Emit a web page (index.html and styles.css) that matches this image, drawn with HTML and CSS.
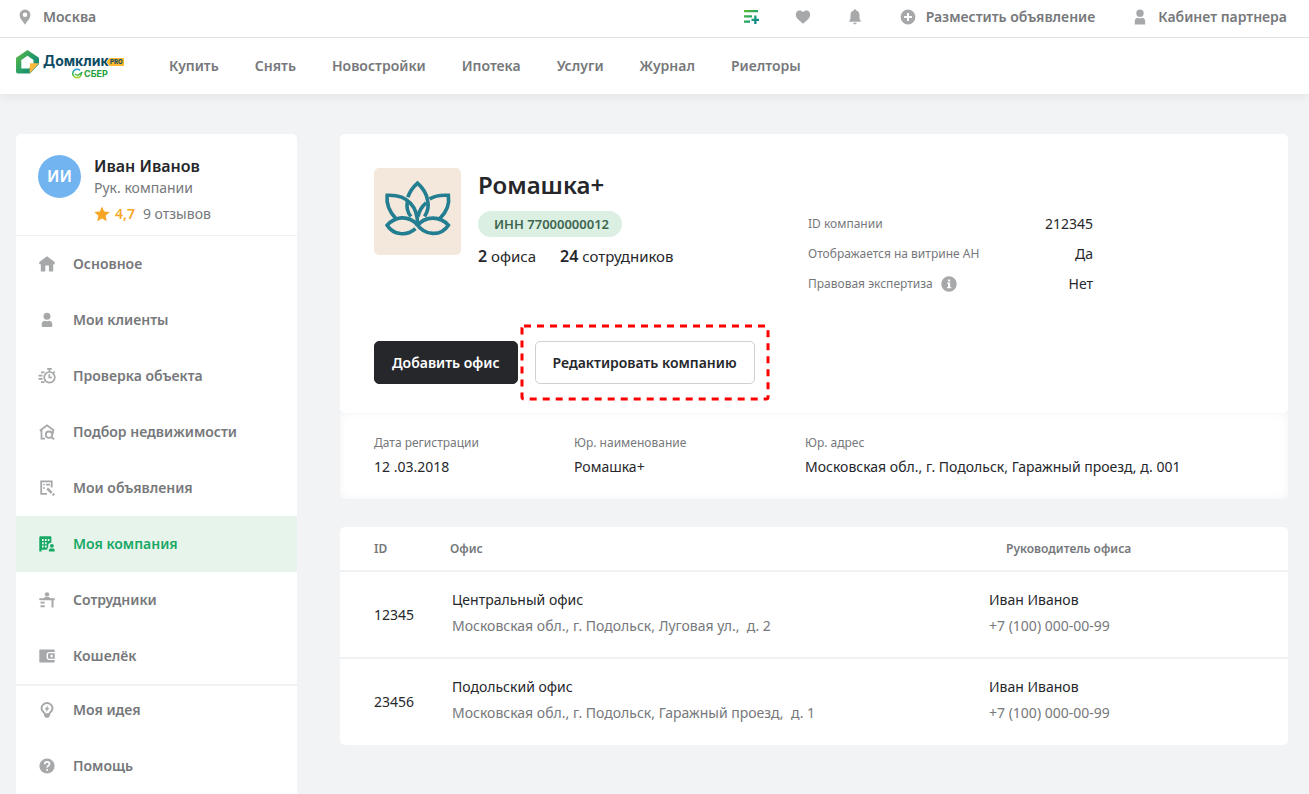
FILE: index.html
```html
<!DOCTYPE html>
<html lang="ru">
<head>
<meta charset="utf-8">
<meta name="viewport" content="width=device-width, initial-scale=1">
<title>Моя компания — Домклик PRO</title>
<link rel="stylesheet" href="styles.css">
</head>
<body>
<header class="site-header">
  <div class="topbar">
    <button class="top-link city" type="button">
      <svg class="icon" viewBox="0 0 16 16"><path fill-rule="evenodd" d="M8 0.5a5.4 5.4 0 0 0-5.4 5.4C2.600 9.700 6 12 8 15.700 10 12 13.400 9.700 13.400 5.900A5.400 5.400 0 0 0 8 .5zm0 2.900a2.300 2.300 0 1 1 0 4.600 2.300 2.300 0 0 1 0-4.600z"/></svg>
      <span>Москва</span>
    </button>
    <div class="top-icons">
      <button class="icon-button" type="button" aria-label="Сравнение">
        <svg class="icon-wide" viewBox="0 0 18 18">
          <defs><linearGradient id="compare" x1="0" y1="0" x2="1" y2="1"><stop offset="0" stop-color="#62bb2b"/><stop offset=".55" stop-color="#1fa36b"/><stop offset="1" stop-color="#087ea8"/></linearGradient></defs>
          <path fill="url(#compare)" d="M2 2h14v2.200H2zM2 7.200h8v2.200H2zM2 12.600h6v2.200H2zM12.200 7.600h2.300v3.100H17v2.300h-2.500V16h-2.300v-3H9.500v-2.300h2.700z"/>
        </svg>
      </button>
      <button class="icon-button" type="button" aria-label="Избранное">
        <svg class="icon" viewBox="0 0 16 16"><path d="M8 14.700 2.700 9.900C.5 7.800.2 4.600 1.700 2.900 3.300 1 6.400 1.100 8 3.300c1.600-2.200 4.700-2.300 6.300-.4 1.500 1.700 1.200 4.900-1 7z"/></svg>
      </button>
      <button class="icon-button" type="button" aria-label="Уведомления">
        <svg class="icon" viewBox="0 0 16 16"><path d="M8 .3c.7 0 1.100.5 1.100 1.200C11.400 2 12.500 3.800 12.500 6v3.500c0 1 1.300 1.600 1.300 3.200H2.200c0-1.600 1.300-2.200 1.300-3.200V6c0-2.200 1.100-4 3.400-4.500C6.900.8 7.300.3 8 .3zM6.300 13.700h3.400C9.500 15.800 6.500 15.800 6.300 13.700z"/></svg>
      </button>
    </div>
    <a class="top-link" href="#">
      <svg class="icon" viewBox="0 0 16 16"><path fill-rule="evenodd" d="M8 .6a7.400 7.400 0 1 0 0 14.800A7.400 7.400 0 0 0 8 .6zM7 4h2v3h3v2H9v3H7V9H4V7h3z"/></svg>
      <span>Разместить объявление</span>
    </a>
    <a class="top-link cabinet" href="#">
      <svg class="icon" viewBox="0 0 16 16"><circle cx="8" cy="4.300" r="3.700"/><path d="M2.800 15.400V12c0-2 1.600-3.300 3-3.300 1.400.7 3 .7 4.400 0 1.400 0 3 1.300 3 3.300v3.400z"/></svg>
      <span>Кабинет партнера</span>
    </a>
  </div>
  <div class="navbar">
    <a class="logo" href="#" aria-label="Домклик PRO">
      <svg viewBox="0 0 110 34">
        <defs>
          <linearGradient id="house" x1="0" y1=".2" x2="1" y2=".9"><stop offset="0" stop-color="#5bb947"/><stop offset=".5" stop-color="#239b68"/><stop offset="1" stop-color="#12807a"/></linearGradient>
          <linearGradient id="check" x1="0" y1="0" x2="0" y2="1"><stop offset="0" stop-color="#2e9fe0"/><stop offset=".5" stop-color="#21b04c"/><stop offset="1" stop-color="#b5d52c"/></linearGradient>
        </defs>
        <path fill="url(#house)" fill-rule="evenodd" d="M11.500 1 .8 8.200C.3 8.600 0 9 0 9.600V22.500C0 23.500.8 24.500 2 24.500H14L23 15V9.600c0-.6-.3-1-.8-1.400zM11.500 6.700 17.500 11v4L13 19.500H5.300V11z"/>
        <path fill="#fbb83b" d="M14 14.300h9L13.500 24.500z"/>
        <text class="logo-name" x="27" y="17">Домклик</text>
        <path fill="#fdb82e" d="M90.500 13l3-4h13.500a1 1 0 0 1 1 1v6a1 1 0 0 1-1 1H93.500z"/>
        <text class="logo-tag" x="94" y="15">PRO</text>
        <path fill="none" stroke="url(#check)" stroke-width="1.500" d="M65.300 23.800A4.300 4.300 0 1 1 64 21.400M59 25l2.500 1.700 5-3.700"/>
        <text class="logo-bank" x="68" y="28">СБЕР</text>
      </svg>
    </a>
    <nav class="main-nav" aria-label="Разделы">
      <a href="#">Купить</a><a href="#">Снять</a><a href="#">Новостройки</a><a href="#">Ипотека</a><a href="#">Услуги</a><a href="#">Журнал</a><a href="#">Риелторы</a>
    </nav>
  </div>
</header>

<div class="layout">
  <aside class="sidebar">
    <div class="profile">
      <div class="avatar" aria-hidden="true">ИИ</div>
      <div class="profile-text">
        <div class="profile-name">Иван Иванов</div>
        <div class="muted">Рук. компании</div>
        <div class="rating">
          <svg class="icon" viewBox="0 0 16 16"><path d="m8 .5 2.200 5 5.500.6-4.100 3.700 1.200 5.400L8 12.400l-4.800 2.800 1.200-5.400L.3 6.100l5.500-.6z"/></svg>
          <b>4,7</b><span class="muted">9 отзывов</span>
        </div>
      </div>
    </div>
    <nav class="menu" aria-label="Кабинет">
      <a class="menu-item" href="#"><svg class="icon" viewBox="0 0 16 16"><path d="M8 .3 15.700 6v2.200H14.200V15.500H9.900V9.500H6.300v6H1.800V8.200H.3V6z"/></svg>Основное</a>
      <a class="menu-item" href="#"><svg class="icon" viewBox="0 0 16 16"><circle cx="8" cy="4.300" r="3.500"/><path d="M2.700 13.800V12c0-2 1.600-3.300 3-3.300 1.500.6 3.100.6 4.600 0 1.400 0 3 1.300 3 3.300v1.800c0 .8-.5 1.200-1.200 1.200H3.900c-.7 0-1.200-.4-1.200-1.200z"/></svg>Мои клиенты</a>
      <a class="menu-item" href="#"><svg class="icon-wide" viewBox="0 0 18 18"><g fill="none" stroke="currentColor" stroke-width="1.700"><circle cx="11.500" cy="10.300" r="5.300"/><path d="M9.200 1.800h4.600M11.500 2v3M15.400 4.500l1.300 1.300M11.300 7.300v3.200H14M3 5.300h3.500M.5 8.700h4M.5 11.800h4M3 15.200h3.500"/></g></svg>Проверка объекта</a>
      <a class="menu-item" href="#"><svg class="icon" viewBox="0 0 16 16"><g fill="none" stroke="currentColor" stroke-width="1.800"><path d="M.8 6.700 8 1.300l7.200 5.400M2.500 6v8.700H6"/><circle cx="10" cy="10.700" r="3.200"/><path d="m12.300 13 2.800 2.400M14 6.500v3.200"/></g></svg>Подбор недвижимости</a>
      <a class="menu-item" href="#"><svg class="icon" viewBox="0 0 16 16"><g fill="none" stroke="currentColor" stroke-width="1.800"><path d="M8 13.900H2.200V1.400h10.500v6.200M7 4.700h4M4.300 4.700h1.400M4.300 8h1.400"/><path stroke-width="2.500" d="m8.200 8.500 4.500 4.300M13.700 13.800l1.400 1.300"/></g></svg>Мои объявления</a>
      <a class="menu-item is-active" href="#" aria-current="page"><svg class="icon" viewBox="0 0 16 16"><path fill-rule="evenodd" d="M1.700.3h9.600c.7 0 1.100.4 1.100 1.100v5a3.400 3.400 0 0 0-3 4.800c-.8.6-1.200 1.300-1.200 2.500H2.600v1.800H.3V1.500C.3.700.9.300 1.700.3zM3 3v2h1.700V3zm2.900 0v2h1.700V3zm2.900 0v2h1.700V3zM3 6.200v2h1.700v-2zm2.900 0v2h1.700v-2zM3 9.400v2h1.700v-2zm2.900 0v2h1.700v-2z"/><circle cx="12.900" cy="9.800" r="1.900"/><path d="M9.900 15.500v-1.200c0-1 .9-1.700 1.700-1.700h2.400c.9 0 1.700.7 1.700 1.700v1.200z"/></svg>Моя компания</a>
      <a class="menu-item" href="#"><svg class="icon" viewBox="0 0 16 16"><circle cx="8" cy="2.400" r="2.200"/><path d="M4.500 6.300C5 5.200 6 4.900 8 4.900s3 .3 3.500 1.400h4.200v2h-1.200v7.200h-2V8.300H.3v-2zM1.500 9.700h4.200v1.900H1.500zM1.500 13.300h4.200v1.900H1.500z"/></svg>Сотрудники</a>
      <a class="menu-item" href="#"><svg class="icon" viewBox="0 0 16 16"><path d="M1.500 1.500h13c.8 0 1.200.4 1.200 1.200v1.200H10.500C8.700 3.900 7.600 5 7.600 6.500v3c0 1.500 1.100 2.600 2.900 2.600h5.200v1.200c0 .8-.4 1.200-1.200 1.200h-13c-.8 0-1.200-.4-1.200-1.200V2.700c0-.8.4-1.200 1.200-1.200z"/><path fill-rule="evenodd" d="M10.300 5.200h5.400v5.600h-5.400c-.8 0-1.300-.5-1.300-1.300v-3c0-.8.5-1.300 1.300-1.300zm1.200 1.500v2.600h2.200V6.700z"/></svg>Кошелёк</a>
    </nav>
    <nav class="menu menu-extra" aria-label="Поддержка">
      <a class="menu-item" href="#"><svg class="icon" viewBox="0 0 16 16"><path fill="none" stroke="currentColor" stroke-width="2" d="M6 12.300C5.700 10.300 2.500 9.500 2.500 6.300a5.500 5.200 0 0 1 11 0c0 3.200-3.200 4-3.500 6z"/><path d="M5 12.300h6v1.200L9.500 15.700h-3L5 13.500zM8.700 3.300 5.600 7.400h1.900L7.200 10l3.200-4.100H8.500z"/></svg>Моя идея</a>
      <a class="menu-item" href="#"><svg class="icon" viewBox="0 0 16 16"><circle cx="8" cy="8" r="7.600"/><path fill="none" stroke="#fff" stroke-width="1.700" d="M5.700 6.200c0-1.500 1-2.300 2.400-2.300 1.400 0 2.400.8 2.400 2 0 1.700-2.400 1.700-2.400 3.600M8.100 10.900v1.800"/></svg>Помощь</a>
    </nav>
  </aside>

  <main class="content">
    <section class="company">
      <div class="card overview">
        <div class="overview-top">
          <div class="identity">
            <svg class="company-logo" viewBox="0 0 86 86" role="img" aria-label="Логотип компании">
              <rect width="86" height="86" rx="5" fill="#f4e8dc"/>
              <g fill="none" stroke="#237e91" stroke-width="3.600" stroke-linejoin="miter">
                <path d="M33.500 29C35 24 38 19.500 43 15C48 19.500 52 25 53 32C54.500 39 53 43.500 50 48"/>
                <path d="M33 33C32 39 33 44 36.500 48"/>
                <path d="M43 56C43.500 39 34 26 13 27C12 36 15 43 21.500 50"/>
                <path d="M55 30.500C60 27.500 66 26.500 73.500 27C75 37 71.500 44 65 50"/>
                <path d="M43.500 48C44.500 42.500 47.500 38 51.500 34.500"/>
                <path d="M43 56C33 46 21 48 13 56.500C19 66 32 68 41 60"/>
                <path d="M42 58C51 46 66 48 73.500 56.500C66 68 50 67 42 55"/>
              </g>
            </svg>
            <div class="identity-text">
              <h1>Ромашка+</h1>
              <span class="inn">ИНН 77000000012</span>
              <div class="counts"><span><b>2</b> офиса</span><span><b>24</b> сотрудников</span></div>
            </div>
          </div>
          <dl class="details">
            <div><dt>ID компании</dt><dd>212345</dd></div>
            <div><dt>Отображается на витрине АН</dt><dd>Да</dd></div>
            <div><dt>Правовая экспертиза <svg class="icon" viewBox="0 0 16 16"><path fill-rule="evenodd" d="M8 .3a7.700 7.700 0 1 0 0 15.400A7.700 7.700 0 0 0 8 .3zM7 3.500h2.200v2H7zM6.200 6.500h3V11h1v1.300H6V11h1V7.800h-.8z"/></svg></dt><dd>Нет</dd></div>
          </dl>
        </div>
        <div class="actions">
          <button class="button button-dark" type="button">Добавить офис</button>
          <div class="highlight">
            <button class="button button-light" type="button">Редактировать компанию</button>
            <svg class="highlight-frame" aria-hidden="true"><rect width="100%" height="100%" rx="2"/></svg>
          </div>
        </div>
      </div>
      <dl class="facts">
        <div><dt>Дата регистрации</dt><dd>12 .03.2018</dd></div>
        <div><dt>Юр. наименование</dt><dd>Ромашка+</dd></div>
        <div><dt>Юр. адрес</dt><dd>Московская обл., г. Подольск, Гаражный проезд, д. 001</dd></div>
      </dl>
    </section>

    <section class="card">
      <table class="offices">
        <thead>
          <tr><th class="col-id" scope="col">ID</th><th scope="col">Офис</th><th class="col-head" scope="col">Руководитель офиса</th></tr>
        </thead>
        <tbody>
          <tr>
            <td class="col-id">12345</td>
            <td class="office">Центральный офис<div class="muted">Московская обл., г. Подольск, Луговая ул.,&nbsp; д. 2</div></td>
            <td class="manager">Иван Иванов<div class="muted">+7 (100) 000-00-99</div></td>
          </tr>
          <tr>
            <td class="col-id">23456</td>
            <td class="office">Подольский офис<div class="muted">Московская обл., г. Подольск, Гаражный проезд,&nbsp; д. 1</div></td>
            <td class="manager">Иван Иванов<div class="muted">+7 (100) 000-00-99</div></td>
          </tr>
        </tbody>
      </table>
    </section>
  </main>
</div>
</body>
</html>
```
FILE: styles.css
```css
:root {
  --ink: #26272b;
  --muted: #76787b;
  --icon: #a6a8aa;
  --page: #f2f3f5;
  --line: #f0f1f2;
  --green: #18a865;
}

* { box-sizing: border-box; }

body {
  margin: 0;
  min-height: 100vh;
  display: flex;
  flex-direction: column;
  background: var(--page);
  color: var(--ink);
  font: 14px/20px "Noto Sans", "Open Sans", sans-serif;
}

a { color: inherit; text-decoration: none; }
button { font: inherit; cursor: pointer; }
dl, dd, h1 { margin: 0; }
b { font-weight: 600; }
svg { fill: currentColor; flex: none; }
.icon { width: 16px; height: 16px; color: var(--icon); }
.icon-wide { width: 18px; height: 18px; }
.muted { color: var(--muted); }

/* Header */
.site-header {
  background: #fff;
  box-shadow: 0 2px 10px rgba(0, 0, 0, .07);
  color: var(--muted);
  font-weight: 600;
}

.topbar {
  display: flex;
  align-items: center;
  height: 38px;
  padding: 0 22px 4px 17px;
  border-bottom: 1px solid #e1e2e4;
}

.top-link {
  display: flex;
  align-items: center;
  gap: 10px;
  padding: 0;
  border: 0;
  background: none;
  color: inherit;
}

.city { margin-right: auto; }
.cabinet { margin-left: 37px; }

.top-icons { display: flex; gap: 34px; margin-right: 36px; }

.icon-button {
  display: flex;
  align-items: center;
  justify-content: center;
  width: 18px;
  height: 18px;
  padding: 0;
  border: 0;
  background: none;
}

.navbar {
  display: flex;
  align-items: center;
  height: 56px;
  padding: 0 16px;
}

.logo { display: flex; margin-right: 43px; }
.logo svg { width: 110px; height: 34px; }
.logo text { font-family: Inter, sans-serif; }
.logo-name { font-size: 14px; font-weight: 700; font-variant: small-caps; fill: #0e4c63; }
.logo-tag { font-size: 6px; font-weight: 800; fill: #0e4c63; }
.logo-bank { font-size: 9px; font-weight: 700; fill: #21a038; }
.main-nav { display: flex; gap: 36px; }

/* Page grid */
.layout {
  flex: 1;
  display: grid;
  grid-template-columns: 281px minmax(0, 1fr);
  gap: 43px;
  padding: 40px 21px 0 16px;
}

.card { background: #fff; border-radius: 5px; }

/* Sidebar */
.sidebar { background: #fff; border-radius: 5px 5px 0 0; }

.profile {
  display: flex;
  gap: 13px;
  height: 102px;
  padding: 21px 22px 0;
  border-bottom: 1px solid var(--line);
}

.avatar {
  width: 43px;
  height: 43px;
  border-radius: 50%;
  background: #72b4f0;
  color: #fff;
  font-size: 16px;
  font-weight: 600;
  line-height: 43px;
  text-align: center;
}

.profile-name { margin-bottom: 1px; font-size: 16px; font-weight: 600; line-height: 22px; }
.rating { display: flex; align-items: center; gap: 5px; margin-top: 6px; }
.rating .icon, .rating b { color: #f6a524; }
.rating .muted { margin-left: 3px; }

.menu { display: grid; }

.menu-item {
  display: grid;
  grid-template-columns: 18px 1fr;
  align-items: center;
  gap: 17px;
  height: 56px;
  padding: 0 22px;
  color: var(--muted);
  font-weight: 600;
}

.menu-item svg { justify-self: center; color: var(--icon); }
.menu-item.is-active { background: #e7f4eb; color: var(--green); }
.menu-item.is-active svg { color: var(--green); }
.menu-extra { gap: 8px; border-top: 2px solid var(--line); }
.menu-extra .menu-item { height: 48px; }

/* Company */
.company { margin-bottom: 28px; }
.overview { position: relative; padding: 34px 34px 29px; }

.overview-top {
  display: grid;
  grid-template-columns: 434fr 285fr 161fr;
  min-height: 173px;
}

.identity { display: flex; align-items: flex-start; gap: 17px; }
.company-logo { width: 87px; height: 87px; }
.identity-text { display: grid; justify-items: start; }
h1 { font-size: 24px; font-weight: 600; line-height: 34px; }

.inn {
  margin-top: 9px;
  padding: 0 13px 0 16px;
  border-radius: 13px;
  background: #dcefe3;
  color: #3d6650;
  font-size: 13px;
  font-weight: 600;
  line-height: 26px;
}

.counts { display: flex; gap: 24px; margin-top: 9px; font-size: 15px; }
.counts b { font-size: 16px; }

.details { display: grid; align-content: start; gap: 10px; padding-top: 46px; }
.details div { display: flex; align-items: center; justify-content: space-between; }
dt { color: var(--muted); font-size: 12px; }
.details dt { display: flex; align-items: center; gap: 8px; }

.actions { display: flex; gap: 17px; }
.highlight { position: relative; }

.button {
  height: 43px;
  padding: 0 17px;
  border: 1px solid var(--ink);
  border-radius: 5px;
  font-weight: 600;
}

.button-dark { background: var(--ink); color: #fff; }
.button-light { background: #fff; border-color: #cfd0d2; color: var(--ink); }

.highlight-frame {
  position: absolute;
  top: -15px;
  left: -13px;
  width: calc(100% + 26px);
  height: calc(100% + 30px);
  overflow: visible;
  fill: none;
  stroke: #f00;
  stroke-width: 3;
  stroke-dasharray: 7 6;
  pointer-events: none;
}

.facts {
  display: grid;
  grid-template-columns: 200fr 231fr 449fr;
  padding: 20px 34px 22px;
  border-radius: 0 0 5px 5px;
  background: #fff;
  box-shadow: inset 0 0 8px rgba(0, 0, 0, .05);
}

.facts dd { margin-top: 4px; }

/* Offices */
.offices { width: 100%; border-collapse: collapse; table-layout: fixed; }

.offices th {
  height: 44px;
  padding: 0;
  color: var(--muted);
  font-size: 12px;
  font-weight: 600;
  text-align: left;
}

.offices td {
  height: 87px;
  padding: 0;
  border-top: 2px solid var(--line);
}

.offices .col-id { width: 110px; padding-left: 34px; }
.offices .col-head { width: 299px; padding-left: 17px; }
.offices .office { padding: 0 0 4px 2px; }
.offices .manager { padding-bottom: 4px; }
.offices .muted { margin-top: 6px; }
```
